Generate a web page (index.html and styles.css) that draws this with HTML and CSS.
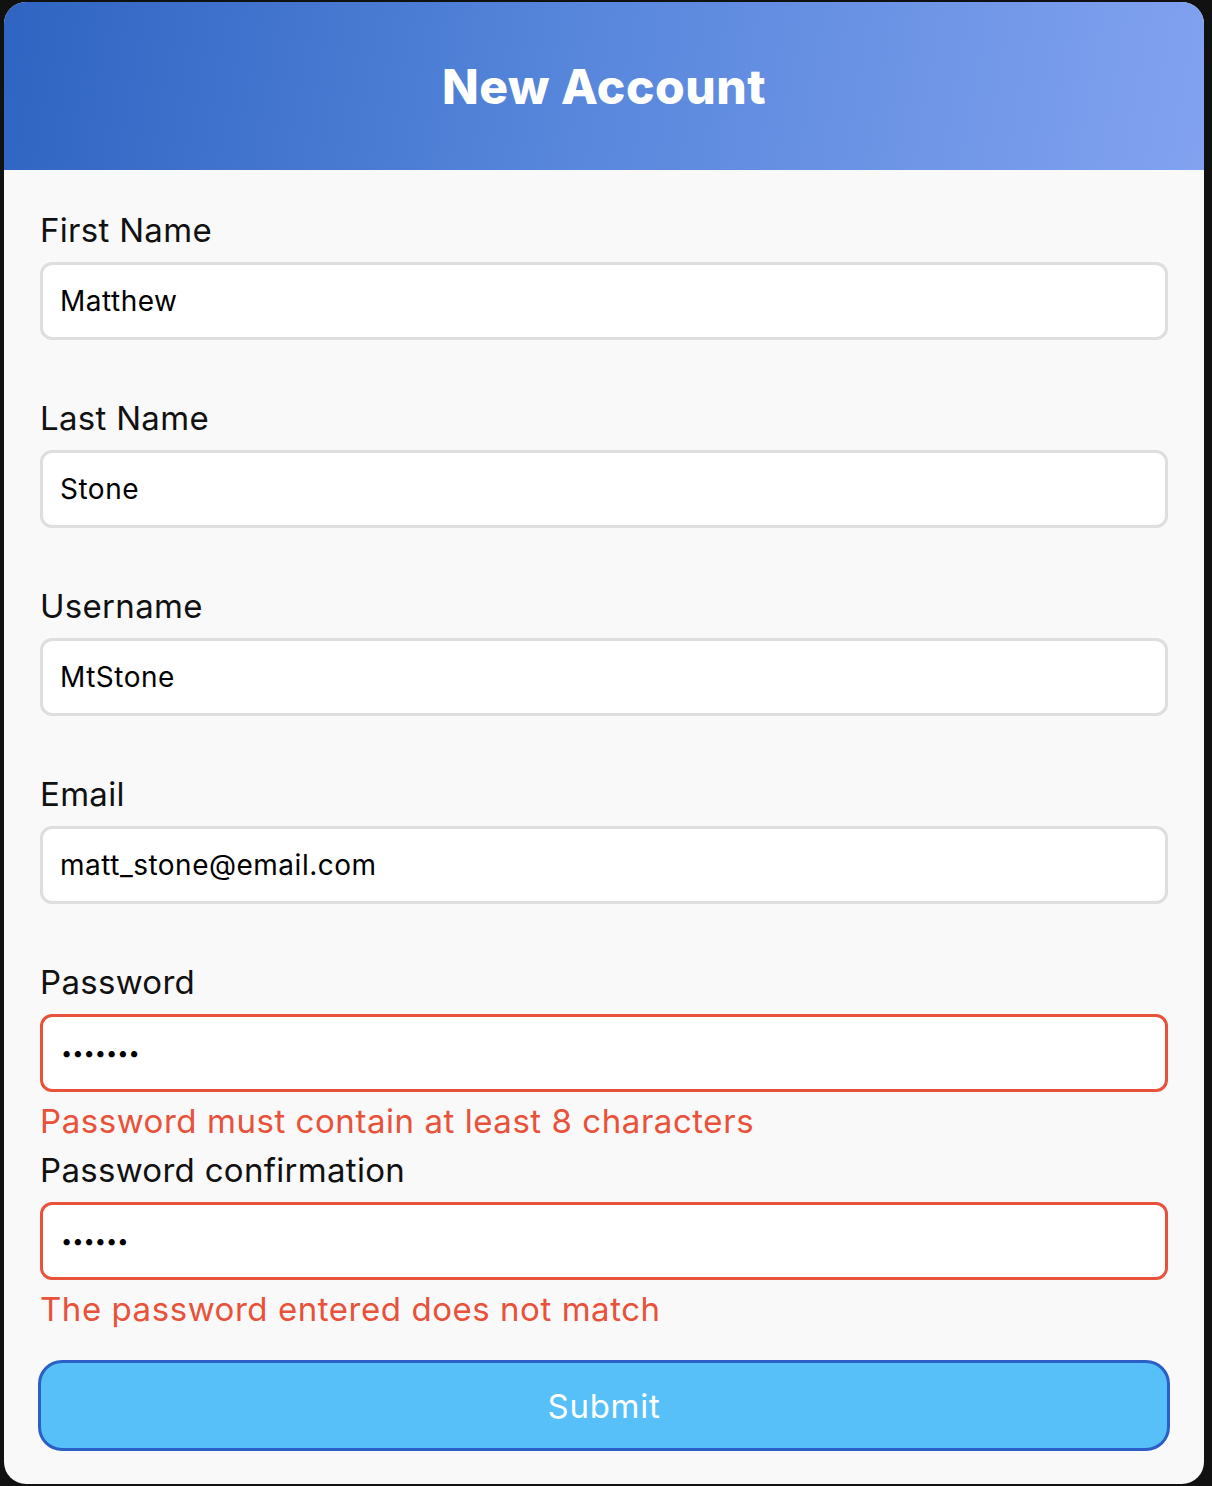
FILE: index.html
```html
<!DOCTYPE html>
<html lang="en">
<head>
<meta charset="utf-8">
<title>New Account</title>
<link rel="stylesheet" href="styles.css">
</head>
<body>
<div class="card">
  <header class="card-header">
    <h1 class="title">New Account</h1>
  </header>
  <form class="form">
    <div class="field">
      <label class="label">First Name</label>
      <input class="input" type="text" value="Matthew">
      <div class="error"></div>
    </div>
    <div class="field">
      <label class="label">Last Name</label>
      <input class="input" type="text" value="Stone">
      <div class="error"></div>
    </div>
    <div class="field">
      <label class="label">Username</label>
      <input class="input" type="text" value="MtStone">
      <div class="error"></div>
    </div>
    <div class="field">
      <label class="label">Email</label>
      <input class="input" type="text" value="matt_stone@email.com">
      <div class="error"></div>
    </div>
    <div class="field">
      <label class="label">Password</label>
      <input class="input input-password input-invalid" type="password" value="1234567">
      <div class="error">Password must contain at least 8 characters</div>
    </div>
    <div class="field">
      <label class="label">Password confirmation</label>
      <input class="input input-password input-invalid" type="password" value="123456">
      <div class="error">The password entered does not match</div>
    </div>
    <button class="submit" type="button">Submit</button>
  </form>
</div>
</body>
</html>
```

FILE: styles.css
```css
html, body {
  margin: 0;
  padding: 0;
  background: #111111;
}

body {
  padding: 2px 8px 2px 4px;
  font-family: Inter, "Noto Sans", sans-serif;
}

.card {
  width: 1200px;
  background: #f9f9f9;
  border-radius: 22px;
  overflow: hidden;
}

.card-header {
  height: 168px;
  display: flex;
  align-items: center;
  justify-content: center;
  background: linear-gradient(100deg, #2f64c2 0%, #5585da 45%, #82a2f0 100%);
}

.title {
  margin: 0;
  color: #ffffff;
  font-size: 48px;
  font-weight: 800;
  letter-spacing: 0.5px;
}

.form {
  padding: 40px 36px 33px 36px;
  display: flex;
  flex-direction: column;
}

.field {
  display: flex;
  flex-direction: column;
}

.label {
  font-size: 33px;
  line-height: 40px;
  letter-spacing: 0.3px;
  color: #111111;
  margin-bottom: 12px;
}

.input {
  box-sizing: border-box;
  height: 78px;
  width: 100%;
  border: 3px solid #dedede;
  border-radius: 12px;
  background: #ffffff;
  padding: 0 17px;
  font-family: Inter, "Noto Sans", sans-serif;
  font-size: 28px;
  letter-spacing: 0.5px;
  color: #000000;
  outline: none;
}

.input-password {
  font-size: 20px;
  letter-spacing: 0;
  padding: 0 18px;
}

.input-invalid {
  border-color: #e8513a;
}

.error {
  min-height: 40px;
  margin: 9px 0 9px 0;
  font-size: 33px;
  line-height: 40px;
  letter-spacing: 0.55px;
  color: #e8513a;
}

.submit {
  margin: 22px -2px 0 -2px;
  height: 91px;
  border: 3px solid #2b5fc6;
  border-radius: 24px;
  background: #58c0f8;
  color: #ffffff;
  font-family: Inter, "Noto Sans", sans-serif;
  font-size: 33px;
  letter-spacing: 0.7px;
}
```
